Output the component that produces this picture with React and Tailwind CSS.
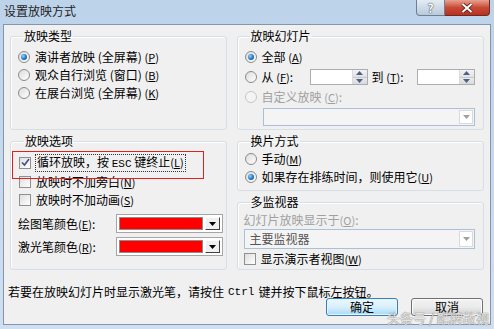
import React from 'react';

const Mn = ({ k }) => (
  <span className="text-[11px]">(<span className="underline">{k}</span>)</span>
);

const Radio = ({ checked, disabled }) => (
  <span
    className={`w-[12px] h-[12px] rounded-full border flex items-center justify-center shrink-0 ${
      disabled ? 'border-[#c6c6c6] bg-[#f4f4f4]' : 'border-[#8a8a8a] bg-gradient-to-br from-[#dcdcdc] to-white'
    }`}
  >
    {checked && (
      <span className="w-[6px] h-[6px] rounded-full bg-[radial-gradient(circle_at_35%_35%,#8ad3ff,#1d6fbf_60%,#0f3f78)]" />
    )}
  </span>
);

const Check = ({ checked }) => (
  <span className="w-[12px] h-[12px] border border-[#8f8f8f] bg-gradient-to-br from-[#dedede] to-white flex items-center justify-center shrink-0">
    {checked && (
      <svg width="9" height="9" viewBox="0 0 9 9">
        <path d="M1 4.5 L3.5 7 L8 1" fill="none" stroke="#3b4f8a" strokeWidth="1.6" />
      </svg>
    )}
  </span>
);

const Spin = () => (
  <div className="w-[58px] h-[16px] border border-[#abadb3] bg-white flex justify-end">
    <div className="w-[15px] h-full flex flex-col border-l border-[#d8dbe2]">
      <div className="flex-1 flex items-center justify-center bg-gradient-to-b from-[#f3f3f3] to-[#e2e2e2] border-b border-[#c4c8d0]">
        <svg width="7" height="4" viewBox="0 0 7 4"><path d="M0 4 L3.5 0 L7 4Z" fill="#4d6185" /></svg>
      </div>
      <div className="flex-1 flex items-center justify-center bg-gradient-to-b from-[#eaeaea] to-[#dadada]">
        <svg width="7" height="4" viewBox="0 0 7 4"><path d="M0 0 L3.5 4 L7 0Z" fill="#4d6185" /></svg>
      </div>
    </div>
  </div>
);

const Combo = ({ text, h }) => (
  <div className={`${h} border border-[#a9c0d9] bg-[#f4f4f4] flex items-stretch p-[1px]`}>
    <div className="flex-1 flex items-center pl-[4px] text-[#555]">{text}</div>
    <div className="w-[14px] border border-[#dadada] bg-white flex items-center justify-center">
      <svg width="7" height="4" viewBox="0 0 7 4"><path d="M0 0 L3.5 4 L7 0Z" fill="#a0a0a0" /></svg>
    </div>
  </div>
);

const ColorPick = () => (
  <div className="w-[107px] h-[19px] border border-[#a5a5a5] bg-white flex p-[2px] gap-[2px]">
    <div className="flex-1 bg-[#ff0000] border border-[#8c8c8c]" />
    <div className="w-[15px] bg-[#f0f0f0] border border-t-white border-l-white border-b-[#404040] border-r-[#404040] flex items-center justify-center">
      <svg width="7" height="4" viewBox="0 0 7 4"><path d="M0 0 L3.5 4 L7 0Z" fill="#000" /></svg>
    </div>
  </div>
);

const Group = ({ title, className, children }) => (
  <fieldset className={`border border-[#d5dfe5] rounded-[3px] shadow-[inset_1px_1px_0_#fff] ${className}`}>
    <legend className="ml-[5px] px-[1px] leading-[14px]">{title}</legend>
    {children}
  </fieldset>
);

const Row = ({ children, className = '' }) => (
  <div className={`flex items-center gap-[5px] ${className}`}>{children}</div>
);

export default function App() {
  return (
    <div className="w-[494px] h-[329px] overflow-hidden relative flex flex-col bg-gradient-to-b from-[#bdd3ea] to-[#cfdff0] font-['Noto_Sans_CJK_SC',sans-serif] text-[12px] text-black leading-[14px]">
      <div className="h-[24px] shrink-0 flex items-start">
        <span className="ml-[4px] mt-[4px] text-[12px] text-[#1e1e1e]">设置放映方式</span>
        <div className="ml-auto mr-[4px] flex">
          <div className="w-[29px] h-[16px] rounded-bl-[4px] border border-t-0 border-[#6f7f92] bg-gradient-to-b from-[#e4ecf4] to-[#b9c9da] flex items-center justify-center text-white font-bold text-[12px] [text-shadow:0_0_1px_#333,0_0_1px_#333]">
            ?
          </div>
          <div className="w-[45px] h-[16px] rounded-br-[4px] border border-t-0 border-l-0 border-[#6b2b25] bg-gradient-to-b from-[#e8a092] via-[#c74a36] to-[#b9311e] flex items-center justify-center">
            <svg width="12" height="10" viewBox="0 0 12 10">
              <path d="M1.5 1 L10.5 9 M10.5 1 L1.5 9" stroke="#4a1a14" strokeWidth="3.6" />
              <path d="M1.5 1 L10.5 9 M10.5 1 L1.5 9" stroke="#fff" strokeWidth="2" />
            </svg>
          </div>
        </div>
      </div>

      <div className="flex-1 mx-[3px] mb-[4px] border border-[#8396ad] bg-[#f0f0f0] flex flex-col px-[6px] pt-[4px] pb-[5px] relative">
        <div className="flex gap-[10px]">
          <Group title="放映类型" className="w-[217px] h-[101px] pl-[7px] pt-[5px]">
            <Row className="h-[18px]"><Radio checked /> <span>演讲者放映 (全屏幕) <Mn k="P" /></span></Row>
            <Row className="h-[18px]"><Radio /> <span>观众自行浏览 (窗口) <Mn k="B" /></span></Row>
            <Row className="h-[18px]"><Radio /> <span>在展台浏览 (全屏幕) <Mn k="K" /></span></Row>
          </Group>
          <Group title="放映幻灯片" className="w-[248px] h-[101px] pl-[7px] pt-[5px]">
            <Row className="h-[18px]"><Radio checked /> <span>全部 <Mn k="A" /></span></Row>
            <Row className="h-[20px] mt-[1px]">
              <Radio /> <span className="w-[43px]">从 <Mn k="F" />:</span>
              <Spin />
              <span className="w-[40px] -ml-[1px]">到 <Mn k="T" />:</span>
              <Spin />
            </Row>
            <Row className="h-[20px] text-[#a0a0a0]"><Radio disabled /> <span>自定义放映 <Mn k="C" />:</span></Row>
            <div className="pl-[18px] pr-[8px] mt-[1px]">
              <Combo h="h-[18px]" text="" />
            </div>
          </Group>
        </div>

        <div className="flex gap-[10px] mt-[4px]">
          <Group title="放映选项" className="w-[217px] h-[136px] pl-[8px] pt-[5px] relative">
            <Row className="h-[19px]">
              <Check checked />
              <span className="outline outline-1 outline-dotted outline-[#333] px-[1px]">
                循环放映，按 <span className="font-['Liberation_Mono',monospace] text-[11px]">ESC</span> 键终止<Mn k="L" />
              </span>
            </Row>
            <Row className="h-[19px]"><Check /> <span>放映时不加旁白<Mn k="N" /></span></Row>
            <Row className="h-[18px]"><Check /> <span>放映时不加动画<Mn k="S" /></span></Row>
            <Row className="h-[23px] mt-[3px] gap-0 -ml-[1px]">
              <span className="w-[93px]">绘图笔颜色<Mn k="E" />:</span>
              <ColorPick />
            </Row>
            <Row className="h-[23px] mt-[0px] gap-0 -ml-[1px]">
              <span className="w-[93px]">激光笔颜色<Mn k="R" />:</span>
              <ColorPick />
            </Row>
          </Group>
          <div className="w-[248px] flex flex-col gap-[4px]">
            <Group title="换片方式" className="h-[57px] pl-[7px] pt-[2px]">
              <Row className="h-[18px]"><Radio /> <span>手动<Mn k="M" /></span></Row>
              <Row className="h-[18px]"><Radio checked /> <span>如果存在排练时间，则使用它<Mn k="U" /></span></Row>
            </Group>
            <Group title="多监视器" className="h-[75px] px-[7px] pt-[2px]">
              <div className="h-[18px] flex items-center text-[#a0a0a0] -ml-[1px]">幻灯片放映显示于<Mn k="O" />:</div>
              <div className="pr-[1px] -ml-[1px]">
                <Combo h="h-[20px]" text="主要监视器" />
              </div>
              <Row className="h-[18px] -ml-[1px] mt-[1px]"><Check /> <span>显示演示者视图<Mn k="W" /></span></Row>
            </Group>
          </div>
        </div>

        <div className="mt-[15px] -ml-[2px] h-[14px] flex items-center">
          若要在放映幻灯片时显示激光笔，请按住 <span className="font-['Liberation_Mono',monospace] text-[11px] mx-[4px]">Ctrl</span> 键并按下鼠标左按钮。
        </div>

        <div className="flex justify-end gap-[13px] -mt-[1px] pr-[1px]">
          <button className="w-[72px] h-[18px] rounded-[3px] border border-[#3c7fb1] bg-gradient-to-b from-[#eaf6fd] via-[#d9f0fc] to-[#a7d9f5] shadow-[inset_0_0_0_1px_#e4f4fc] flex items-center justify-center leading-none">
            确定
          </button>
          <button className="w-[72px] h-[18px] rounded-[3px] border border-[#707070] bg-gradient-to-b from-[#f2f2f2] via-[#ebebeb] to-[#cfcfcf] shadow-[inset_0_0_0_1px_#fcfcfc] flex items-center justify-center leading-none">
            取消
          </button>
        </div>

        <div className="absolute left-[8px] top-[126px] w-[192px] h-[28px] border border-[#e0201c] pointer-events-none" />

        <div className="absolute left-[383px] top-[286px] text-[13px] leading-[14px] text-white/80 [text-shadow:0_0_1px_#777,0_0_1px_#777] whitespace-nowrap pointer-events-none">
          头条号 / 酷牌故视
        </div>
      </div>
    </div>
  );
}
